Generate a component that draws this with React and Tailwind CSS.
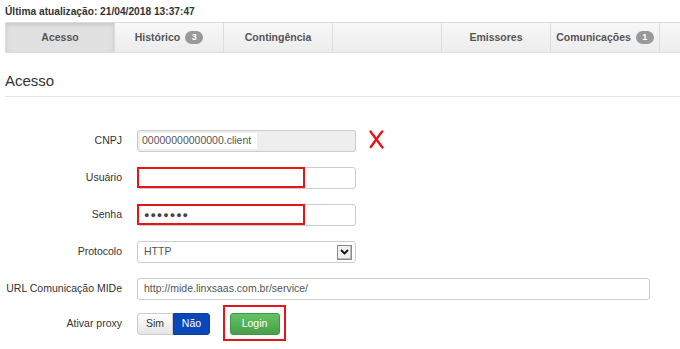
import React from 'react';

const tabs = [
  { label: 'Acesso', active: true },
  { label: 'Histórico', badge: '3' },
  { label: 'Contingência' },
  { label: '' },
  { label: 'Emissores' },
  { label: 'Comunicações', badge: '1' },
  { label: '' },
];

function Row({ label, children, className = '' }) {
  return (
    <div className={`flex items-center h-[22px] ${className}`}>
      <div className="w-[117px] text-right whitespace-nowrap text-[10.5px] text-[#333]">{label}</div>
      <div className="ml-[15px] flex items-center">{children}</div>
    </div>
  );
}

function RedX() {
  return (
    <svg width="15" height="19" viewBox="0 0 15 19" className="ml-[13px] -mt-[4px]">
      <path d="M1.5 1.5 C5 6 9.5 12.5 13.5 17.5" stroke="#e8141c" strokeWidth="2.4" fill="none" strokeLinecap="round" />
      <path d="M13.2 1.5 C9.5 6 5.5 12 1.8 17" stroke="#e8141c" strokeWidth="2.4" fill="none" strokeLinecap="round" />
    </svg>
  );
}

export default function App() {
  return (
    <div className="w-[680px] h-[349px] bg-white overflow-hidden font-['Liberation_Sans',Arial,sans-serif] text-[#333]">
      <div className="pl-[5px] pt-[5px] h-[22px] text-[10.2px] font-bold text-[#333] leading-[14px] whitespace-nowrap">
        Última atualização: 21/04/2018 13:37:47
      </div>

      <div className="ml-[5px] flex h-[31px] border border-[#ddd] border-r-0 bg-gradient-to-b from-[#f8f8f8] to-[#ececec]">
        {tabs.map((t, i) => (
          <div
            key={i}
            className={`w-[109px] shrink-0 flex items-center justify-center gap-[5px] text-[10.5px] font-bold text-[#555] border-r border-[#ddd] ${
              t.active ? 'bg-[#e1e1e1] shadow-[inset_0_2px_4px_rgba(0,0,0,0.12)]' : ''
            }`}
          >
            {t.label}
            {t.badge && (
              <span className="inline-flex items-center justify-center h-[13px] min-w-[18px] px-[5px] rounded-full bg-[#999] text-white text-[9px] font-bold leading-none">
                {t.badge}
              </span>
            )}
          </div>
        ))}
      </div>

      <div className="ml-[5px] mt-[19px] text-[15px] leading-[18px] text-[#333]">Acesso</div>
      <div className="ml-[5px] mt-[6px] border-b border-[#e5e5e5]"></div>

      <div className="ml-[5px] mt-[33px] flex flex-col gap-[15px]">
        <Row label="CNPJ">
          <div className="w-[219px] h-[22px] rounded-[3px] border border-[#ccc] bg-[#eee] flex items-center pl-[2px]">
            <span className="bg-white h-[16px] w-[117px] flex items-center pl-[2px] text-[10.5px] text-[#555]">
              00000000000000.client
            </span>
          </div>
          <RedX />
        </Row>

        <Row label="Usuário">
          <div className="relative w-[219px] h-[22px] rounded-[3px] border border-[#ccc] bg-white">
            <div className="absolute -left-[1px] -top-[1px] w-[168px] h-[21px] border-2 border-[#e3161e]"></div>
          </div>
        </Row>

        <Row label="Senha">
          <div className="relative w-[219px] h-[22px] rounded-[3px] border border-[#ccc] bg-white flex items-center pl-[6px]">
            <span className="text-[9px] tracking-[1px] text-[#444] leading-none">●●●●●●●</span>
            <div className="absolute -left-[1px] -top-[1px] w-[168px] h-[21px] border-2 border-[#e3161e]"></div>
          </div>
        </Row>

        <Row label="Protocolo">
          <div className="w-[219px] h-[22px] rounded-[3px] border border-[#ccc] bg-white flex items-center pl-[6px] pr-[3px]">
            <span className="flex-1 text-[10.5px] text-[#555]">HTTP</span>
            <span className="w-[15px] h-[15px] border border-[#888] bg-[#f0f0f0] flex items-center justify-center shadow-[inset_-1px_-1px_0_#bbb]">
              <svg width="9" height="6" viewBox="0 0 9 6">
                <path d="M1 1 L4.5 4.5 L8 1" stroke="#111" strokeWidth="1.8" fill="none" />
              </svg>
            </span>
          </div>
        </Row>

        <Row label="URL Comunicação MIDe">
          <div className="w-[513px] h-[22px] rounded-[3px] border border-[#ccc] bg-white flex items-center pl-[6px] text-[10.5px] text-[#555]">
            http://mide.linxsaas.com.br/service/
          </div>
        </Row>

        <Row label="Ativar proxy" className="-mt-[2px]">
          <div className="flex h-[22px]">
            <span className="w-[36px] h-[22px] flex items-center justify-center text-[10.5px] text-[#333] border border-[#ccc] rounded-l-[3px] bg-gradient-to-b from-white to-[#e6e6e6]">
              Sim
            </span>
            <span className="w-[37px] h-[22px] flex items-center justify-center text-[10.5px] text-white bg-[#0b48b7] border border-[#0a3d9c] rounded-r-[3px]">
              Não
            </span>
          </div>
          <div className="ml-[13px] -mt-[2px] relative w-[63px] h-[36px] border-2 border-[#e3161e] flex items-center justify-center">
            <span className="w-[50px] h-[22px] mt-[2px] rounded-[3px] flex items-center justify-center text-[10.5px] text-white bg-gradient-to-b from-[#62c462] to-[#4a9d4a] border border-[#419641]">
              Login
            </span>
          </div>
        </Row>
      </div>
    </div>
  );
}
